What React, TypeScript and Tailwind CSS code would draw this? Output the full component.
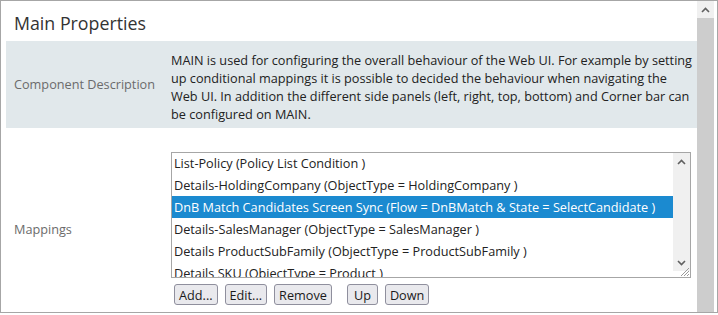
import React from "react";

const font = { fontFamily: '"Open Sans", "Noto Sans", sans-serif' };

function ChevUp() {
  return (
    <svg width="9" height="6" viewBox="0 0 9 6">
      <polyline points="1,5 4.5,1.5 8,5" fill="none" stroke="#606060" strokeWidth="1.6" />
    </svg>
  );
}
function ChevDown() {
  return (
    <svg width="9" height="6" viewBox="0 0 9 6">
      <polyline points="1,1 4.5,4.5 8,1" fill="none" stroke="#606060" strokeWidth="1.6" />
    </svg>
  );
}

const items = [
  "List-Policy (Policy List Condition )",
  "Details-HoldingCompany (ObjectType = HoldingCompany )",
  "DnB Match Candidates Screen Sync (Flow = DnBMatch & State = SelectCandidate )",
  "Details-SalesManager (ObjectType = SalesManager )",
  "Details ProductSubFamily (ObjectType = ProductSubFamily )",
  "Details SKU (ObjectType = Product )",
];

function Btn({ children, wide = false }: { children: React.ReactNode; wide?: boolean }) {
  return (
    <button
      className={
        "h-[21px] border border-[#8f8f9d] bg-[#e9e9ed] rounded-[3px] text-[12.7px] leading-[18px] text-[#1a1a1a] " +
        (wide ? "px-[6px]" : "px-[4px]")
      }
    >
      {children}
    </button>
  );
}

export default function App() {
  return (
    <div className="w-[718px] h-[315px] bg-white" style={font}>
      <div className="h-[313px] border border-[#a6a6a6] flex overflow-hidden">
        <div className="flex-1 min-w-0 pl-[5px]">
          <div className="h-[40px] pl-[8px] pt-[9px] text-[17.8px] leading-[26px] text-[#333]">
            Main Properties
          </div>
          <div className="h-[87px] bg-[#e1e8eb] flex">
            <div className="w-[165px] shrink-0 pl-[8px] flex items-center text-[12.7px] text-[#6b6b6b] whitespace-nowrap">
              Component Description
            </div>
            <div className="flex-1 pt-[10px] text-[12.7px] leading-[18px] text-[#222] whitespace-nowrap">
              <div>MAIN is used for configuring the overall behaviour of the Web UI. For example by setting</div>
              <div>up conditional mappings it is possible to decided the behaviour when navigating the</div>
              <div>Web UI. In addition the different side panels (left, right, top, bottom) and Corner bar can</div>
              <div>be configured on MAIN.</div>
            </div>
          </div>
          <div className="flex pt-[24px]">
            <div className="w-[165px] shrink-0 pl-[8px] pt-[2px] flex items-center text-[12.7px] text-[#6b6b6b]">
              Mappings
            </div>
            <div className="flex flex-col">
              <div className="w-[520px] h-[126px] border border-[#a6a6a6] flex overflow-hidden">
                <div className="flex-1 min-w-0 overflow-hidden">
                  <div className="-mt-[1px]">
                    {items.map((t, i) => (
                      <div
                        key={i}
                        className={
                          "h-[22px] pl-[2px] text-[12.7px] leading-[22px] whitespace-nowrap " +
                          (i === 2 ? "bg-[#1b8ad0] text-white" : "text-[#222]")
                        }
                      >
                        {t}
                      </div>
                    ))}
                  </div>
                </div>
                <div className="w-[17px] shrink-0 bg-[#f0f0f0] flex flex-col">
                  <div className="h-[17px] flex items-center justify-center">
                    <ChevUp />
                  </div>
                  <div className="h-[84px]" />
                  <div className="h-[17px] flex items-center justify-center">
                    <ChevDown />
                  </div>
                  <div className="flex-1 bg-white relative">
                    <svg width="11" height="11" viewBox="0 0 11 11" className="absolute right-0 bottom-0">
                      <line x1="10" y1="2" x2="2" y2="10" stroke="#9a9a9a" strokeWidth="1" />
                      <line x1="10" y1="5" x2="5" y2="10" stroke="#9a9a9a" strokeWidth="1" />
                      <line x1="10" y1="8" x2="8" y2="10" stroke="#9a9a9a" strokeWidth="1" />
                    </svg>
                  </div>
                </div>
              </div>
              <div className="flex mt-[6px] pl-[3px] gap-[7px]">
                <Btn>Add...</Btn>
                <Btn>Edit...</Btn>
                <Btn>Remove</Btn>
                <div className="w-[1px]" />
                <Btn wide>Up</Btn>
                <Btn>Down</Btn>
              </div>
            </div>
          </div>
        </div>
        <div className="w-[17px] shrink-0 flex flex-col bg-[#f0f0f0]">
          <div className="h-[17px] flex items-center justify-center">
            <ChevUp />
          </div>
          <div className="flex-1 bg-[#cdcdcd]" />
        </div>
        <div className="w-[3px] shrink-0" />
      </div>
    </div>
  );
}
